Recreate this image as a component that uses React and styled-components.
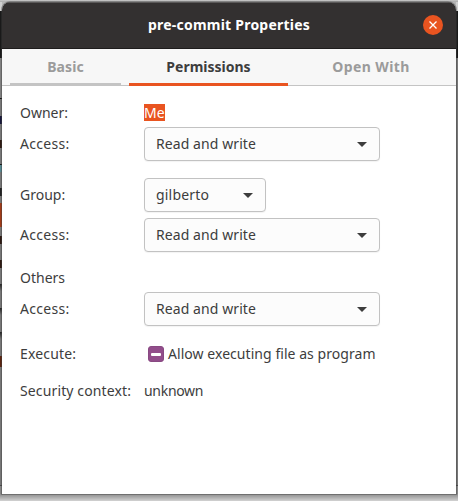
import React, { useState } from 'react'
import styled, { createGlobalStyle } from 'styled-components';

const GlobalStyle = createGlobalStyle`
  * {
    box-sizing: border-box;
  }
  body {
    margin: 0;
    overflow: hidden;
    font-family: "Noto Sans", "Open Sans", sans-serif;
    font-size: 14px;
    color: #3d3d3d;
  }
`;

// the edges of the windows behind show around the dialog
const Desktop = styled.div`
  width: 458px;
  height: 501px;
  padding: 2px 2px 7px;
  background:
    linear-gradient(#c8c8c8, #a9a9a9) 0 0 / 100% 2px no-repeat,
    linear-gradient(#8c8c8c, #d2d2d2) 0 100% / 100% 7px no-repeat,
    linear-gradient(
      #cfcfcf 11px, #191919 11px, #191919 58px, #808080 58px, #808080 98px,
      #151515 98px, #151515 99px, #777 99px, #777 116px, #17173a 116px,
      #17173a 124px, #777 124px, #777 140px, #2e1a12 140px, #2e1a12 148px,
      #777 148px, #777 164px, #151515 164px, #151515 165px, #568890 165px,
      #568890 172px, #777 172px, #777 188px, #222 188px, #222 196px,
      #777 196px, #777 203px, #a03b18 203px, #a03b18 227px, #777 227px,
      #777 236px, #2e1a12 236px, #2e1a12 244px, #777 244px, #777 260px,
      #2e1a12 260px, #2e1a12 268px, #777 268px, #777 284px, #222 284px,
      #777 291px, #777 308px, #222 308px, #777 315px, #777 332px,
      #222 332px, #777 339px, #777 356px, #5a2410 356px, #5a2410 367px,
      #777 367px, #777 485px, #4a4a4a 485px, #4a4a4a 486px, #858585 486px
    ) 0 0 / 2px 100% no-repeat,
    linear-gradient(#cfcfcf 11px, #191919 11px, #191919 58px, #777 58px, #777 485px, #4a4a4a 485px, #4a4a4a 486px, #858585 486px) 100% 0 / 2px 100% no-repeat,
    #b5b5b5;
`;

const Window = styled.main`
  height: 492px;
  border-radius: 8px 8px 0 0;
  background-color: #ffffff;
  box-shadow: 0 0 0 1px rgba(60, 60, 60, 0.4);
  overflow: hidden;
`;

const TitleBar = styled.header`
  display: grid;
  grid-template-columns: 33px 1fr 33px;
  align-items: center;
  height: 47px;
  padding-bottom: 1px;
  background-color: #333030;
  border-top: 1px solid #5a5858;
  border-bottom: 1px solid #1e1c1c;
`;

const Title = styled.h1`
  grid-column: 2;
  margin: 0;
  text-align: center;
  font-size: 14px;
  line-height: 18px;
  font-weight: 700;
  letter-spacing: ${props => props.$spacing}px;
  color: #ffffff;
`;

const CloseButton = styled.button`
  display: flex;
  align-items: center;
  justify-content: center;
  width: 20px;
  height: 20px;
  padding: 0;
  border: none;
  border-radius: 50%;
  background-color: #e95420;
  cursor: pointer;
`;

const TabBar = styled.nav`
  display: flex;
  gap: 8px;
  height: 37px;
  padding: 0 8px;
  background: linear-gradient(#c4c4c4, #c4c4c4) 0 100% / 100% 1px no-repeat, #f7f7f7;
`;

const Tab = styled.button`
  width: ${props => props.$width}px;
  padding: 1px 0 0;
  border: none;
  border-bottom: 3px solid ${props => props.$line};
  background: none;
  font-family: inherit;
  font-size: 14px;
  line-height: 18px;
  font-weight: 700;
  letter-spacing: ${props => props.$spacing}px;
  color: ${props => props.$active ? '#3d3d3d' : '#9b9b9b'};
  cursor: pointer;
`;

const Form = styled.section`
  padding: 18px 0 0 18px;
`;

const Row = styled.div`
  display: grid;
  grid-template-columns: 124px 1fr;
  align-items: center;
  height: ${props => props.$tall ? 34 : 18}px;
  margin-top: ${props => props.$gap || 0}px;
`;

const Label = styled.span`
  line-height: 18px;
  white-space: nowrap;
  letter-spacing: ${props => props.$spacing || 0}px;
`;

const Selection = styled.span`
  justify-self: start;
  height: 17px;
  line-height: 17px;
  align-self: start;
  color: #ffffff;
  background-color: #e95420;
`;

const SelectBox = styled.button`
  display: flex;
  align-items: center;
  justify-content: space-between;
  width: ${props => props.$width}px;
  height: 34px;
  padding: 0 12px 0 11px;
  border: 1px solid #c2c2c2;
  border-radius: 4px;
  background-color: #fcfcfc;
  box-shadow: 0 1px 1px rgba(0, 0, 0, 0.05);
  font-family: inherit;
  font-size: 14px;
  line-height: 18px;
  color: inherit;
`;

const CheckLabel = styled.label`
  display: flex;
  align-items: center;
  gap: 4px;
  padding-left: 4px;
`;

const CheckBox = styled.span`
  display: flex;
  align-items: center;
  justify-content: center;
  width: 16px;
  height: 16px;
  border: 1px solid #884982;
  border-radius: 3px;
  background-color: #924d8b;
`;

const Dash = styled.span`
  width: 10px;
  height: 3px;
  border-radius: 1px;
  background-color: #ffffff;
`;

const tabs = [
  { name: 'Basic', width: 111, line: '#c4c4c4', spacing: 0.1 },
  { name: 'Permissions', width: 159, line: '#e95420', spacing: 0 },
  { name: 'Open With', width: 150, line: 'transparent', spacing: 0.4 },
]

const Select = ({ value, width, spacing }) => (
  <SelectBox $width={width}>
    <Label $spacing={spacing}>{value}</Label>
    <svg width="10" height="5" viewBox="0 0 10 5">
      <path d="M0 0H10L5 5Z" fill="#3d3d3d"/>
    </svg>
  </SelectBox>
)

const App = () => {

  const [active, setActive] = useState('Permissions')

  return (
    <>
      <GlobalStyle/>
      <Desktop>
        <Window>
          <TitleBar>
            <Title $spacing={0.23}>pre-commit Properties</Title>
            <CloseButton aria-label="Close">
              <svg width="8" height="8" viewBox="0 0 8 8">
                <path d="M0.5 0.5L7.5 7.5M7.5 0.5L0.5 7.5" stroke="#ffffff" strokeWidth="1.3"/>
              </svg>
            </CloseButton>
          </TitleBar>
          <TabBar>
            {
              tabs.map(tab => (
                <Tab
                  key={tab.name}
                  $width={tab.width}
                  $line={tab.line}
                  $spacing={tab.spacing}
                  $active={tab.name === active}
                  onClick={() => setActive(tab.name)}
                >
                  {tab.name}
                </Tab>
              ))
            }
          </TabBar>
          <Form>
            <Row>
              <Label>Owner:</Label>
              <Selection>Me</Selection>
            </Row>
            <Row $tall $gap={5}>
              <Label $spacing={0.3}>Access:</Label>
              <Select value="Read and write" width={236} spacing={0.08}/>
            </Row>
            <Row $tall $gap={17}>
              <Label>Group:</Label>
              <Select value="gilberto" width={122} spacing={0.2}/>
            </Row>
            <Row $tall $gap={6}>
              <Label $spacing={0.3}>Access:</Label>
              <Select value="Read and write" width={236} spacing={0.08}/>
            </Row>
            <Row $gap={17}>
              <Label>Others</Label>
            </Row>
            <Row $tall $gap={5}>
              <Label $spacing={0.3}>Access:</Label>
              <Select value="Read and write" width={236} spacing={0.08}/>
            </Row>
            <Row $gap={19}>
              <Label $spacing={0.15}>Execute:</Label>
              <CheckLabel>
                <CheckBox><Dash/></CheckBox>
                <Label $spacing={0.05}>Allow executing file as program</Label>
              </CheckLabel>
            </Row>
            <Row $gap={19}>
              <Label $spacing={0.13}>Security context:</Label>
              <Label $spacing={-0.3}>unknown</Label>
            </Row>
          </Form>
        </Window>
      </Desktop>
    </>
  )
}

export default App
